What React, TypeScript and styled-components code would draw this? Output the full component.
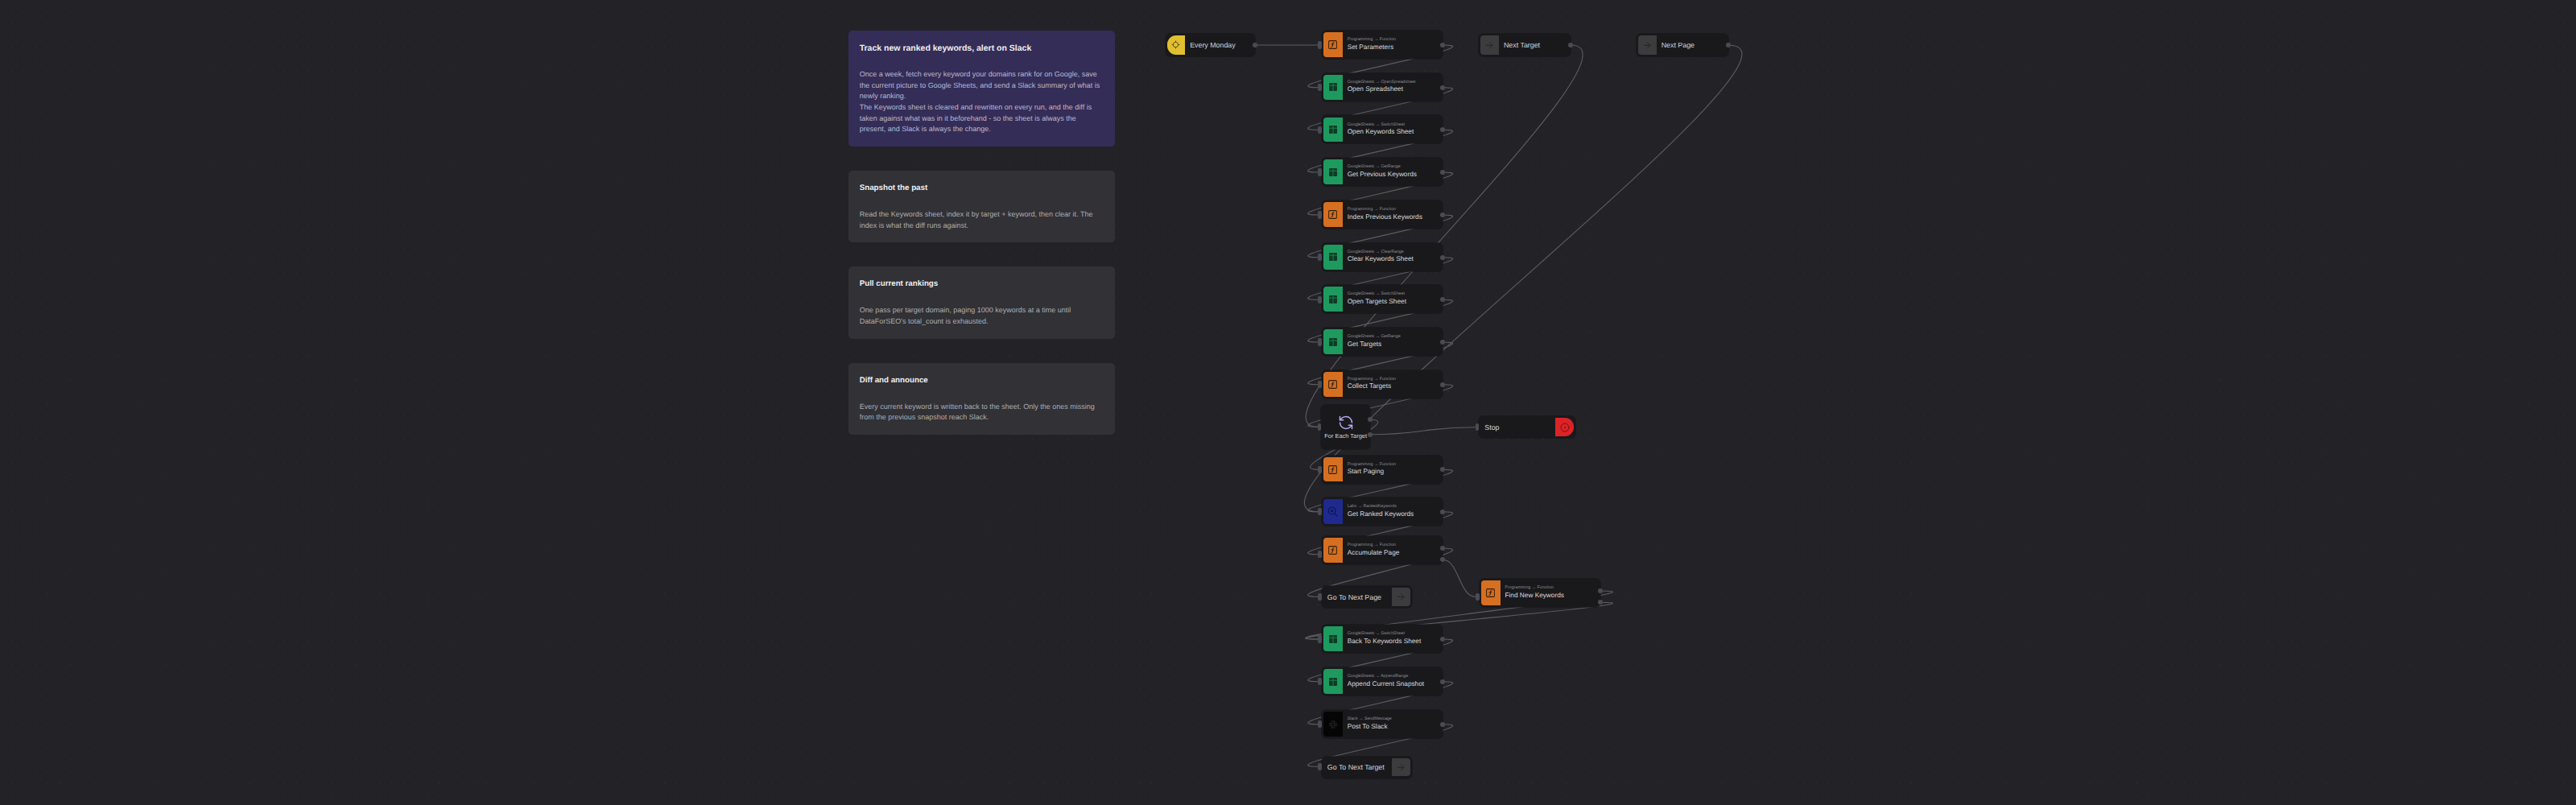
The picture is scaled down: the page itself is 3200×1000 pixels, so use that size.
import styled, { createGlobalStyle } from 'styled-components';
import { ArrowRight, CircleDot, Locate, RefreshCcw, SquareFunction } from 'lucide-react';
import { SiSlack } from 'react-icons/si';

const GlobalStyle = createGlobalStyle`
  html, body {
    margin: 0;
    padding: 0;
    background: #232327;
  }

  body {
    font-family: "Liberation Sans", Arial, sans-serif;
    text-rendering: geometricPrecision;
  }
`;

const Canvas = styled.main`
  position: relative;
  width: 3200px;
  height: 1000px;
  overflow: hidden;
  background-color: #232327;
  background-image: radial-gradient(circle, #303036 0.7px, transparent 0.8px);
  background-size: 14.75px 14.75px;
  background-position: 7px 7px;
`;

const Notes = styled.section`
  position: absolute;
  left: 1054px;
  top: 38.2px;
  width: 331px;
  display: flex;
  flex-direction: column;
  gap: 30.2px;
`;

const Note = styled.article<{ $primary?: boolean }>`
  box-sizing: border-box;
  padding: 15px 13.7px 14px;
  border-radius: 5px;
  background: ${({ $primary }) => ($primary ? '#342d57' : '#313136')};
  color: ${({ $primary }) => ($primary ? '#bcb8cf' : '#aeaeb1')};
`;

const NoteTitle = styled.h2<{ $primary?: boolean }>`
  margin: 0 0 19px;
  font-size: ${({ $primary }) => ($primary ? '10.5px' : '9.75px')};
  line-height: 14px;
  font-weight: bold;
  color: #efeff2;
`;

const NoteBody = styled.p`
  margin: 0;
  font-size: 9px;
  line-height: 13.6px;
`;

const Edges = styled.svg`
  position: absolute;
  inset: 0;
  fill: none;
  stroke: #5e5e62;
  stroke-width: 1.1;
`;

const Node = styled.div<{ $x: number; $y: number; $w: number; $h: number }>`
  position: absolute;
  left: ${({ $x }) => $x}px;
  top: ${({ $y }) => $y}px;
  width: ${({ $w }) => $w}px;
  height: ${({ $h }) => $h}px;
  box-sizing: border-box;
  display: flex;
  align-items: center;
  padding: 2.2px 2px;
  border-radius: 6px;
  background: #19191c;
  box-shadow: 0 0 0 1px rgba(20, 20, 23, 0.55);
`;

const LoopNode = styled(Node)`
  flex-direction: column;
  justify-content: flex-start;
  padding: 12px 0 0;
`;

const IconBlock = styled.div<{ $color: string; $shape: 'left' | 'right' | 'pillLeft' | 'pillRight'; $wide?: boolean }>`
  flex: 0 0 auto;
  width: ${({ $wide }) => ($wide ? '24.5px' : '22.7px')};
  height: 100%;
  display: flex;
  align-items: center;
  justify-content: center;
  background: ${({ $color }) => $color};
  border-radius: ${({ $shape }) =>
    ({
      left: '4px 0 0 4px',
      right: '0 4px 4px 0',
      pillLeft: '11px 0 0 11px',
      pillRight: '0 11px 11px 0',
    })[$shape]};
`;

const TextStack = styled.div`
  display: flex;
  flex-direction: column;
  gap: 0.7px;
  margin-left: 5.5px;
  padding-bottom: 1.6px;
  min-width: 0;
`;

const Service = styled.span`
  font-size: 5.3px;
  line-height: 7px;
  color: #8d8d94;
  white-space: nowrap;
`;

const Title = styled.span`
  font-size: 8.25px;
  line-height: 9.5px;
  color: #dadadc;
  white-space: nowrap;
`;

const Label = styled.span<{ $flush?: boolean }>`
  flex: 1 1 auto;
  margin-left: ${({ $flush }) => ($flush ? '5.3px' : '6px')};
  font-size: 8.85px;
  color: #d6d6d8;
  white-space: nowrap;
`;

const LoopLabel = styled.span`
  margin-top: 1.5px;
  font-size: 7.43px;
  line-height: 9px;
  color: #d6d6d8;
  white-space: nowrap;
`;

const InHandle = styled.i<{ $top: number }>`
  position: absolute;
  left: -4.4px;
  top: ${({ $top }) => $top - 4.6}px;
  width: 4.4px;
  height: 9.2px;
  border-radius: 2px;
  background: #4b4b53;
`;

const OutHandle = styled.i<{ $top: number }>`
  position: absolute;
  right: -3px;
  top: ${({ $top }) => $top - 3}px;
  width: 6px;
  height: 6px;
  border-radius: 50%;
  background: #4b4b53;
`;

const SheetsIcon = () => (
  <svg width="10" height="10" viewBox="0 0 10 10">
    <rect width="10" height="10" rx="1" fill="#0c3b26" />
    <path d="M0 3.2H10M5 0.6V10" stroke="#1f9a5f" strokeWidth="0.7" fill="none" />
  </svg>
);

const SearchIcon = () => (
  <svg width="13" height="13" viewBox="0 0 13 13" fill="none" stroke="#0e1552" strokeWidth="1.1">
    <circle cx="5.6" cy="5.6" r="4.4" />
    <circle cx="5.6" cy="5.6" r="1.6" fill="#0e1552" stroke="none" />
    <path d="M8.8 8.8L12.2 12.2" strokeLinecap="round" />
  </svg>
);

type Kind = 'fn' | 'sheets' | 'labs' | 'slack';

const kindStyle: Record<Kind, { color: string; icon: React.ReactNode }> = {
  fn: { color: '#d76f20', icon: <SquareFunction size={13} color="#33200f" strokeWidth={1.9} /> },
  sheets: { color: '#1f9a5f', icon: <SheetsIcon /> },
  labs: { color: '#1f2a8e', icon: <SearchIcon /> },
  slack: { color: '#050505', icon: <SiSlack size={10} color="#1e1e1e" /> },
};

interface ActionItem {
  kind: Kind;
  service: string;
  title: string;
  y: number;
  inY: number;
  outY: number[];
  x?: number;
}

const COL = 1641.7;
const ACTION_W = 150.3;
const ACTION_H = 35;

const seq = (kind: Kind, service: string, title: string, y: number, hy: number): ActionItem => ({
  kind,
  service,
  title,
  y,
  inY: hy,
  outY: [hy],
});

const actions: ActionItem[] = [
  seq('fn', 'Programming → Function', 'Set Parameters', 38, 56),
  seq('sheets', 'GoogleSheets → OpenSpreadsheet', 'Open Spreadsheet', 90.7, 108.7),
  seq('sheets', 'GoogleSheets → SwitchSheet', 'Open Keywords Sheet', 143.4, 161.3),
  seq('sheets', 'GoogleSheets → GetRange', 'Get Previous Keywords', 196, 214),
  seq('fn', 'Programming → Function', 'Index Previous Keywords', 249, 267),
  seq('sheets', 'GoogleSheets → ClearRange', 'Clear Keywords Sheet', 301.7, 319.7),
  seq('sheets', 'GoogleSheets → SwitchSheet', 'Open Targets Sheet', 354.3, 372.3),
  seq('sheets', 'GoogleSheets → GetRange', 'Get Targets', 407, 425),
  seq('fn', 'Programming → Function', 'Collect Targets', 459.7, 477.7),
  seq('fn', 'Programming → Function', 'Start Paging', 565.5, 583.3),
  seq('labs', 'Labs → RankedKeywords', 'Get Ranked Keywords', 618, 635.7),
  {
    kind: 'fn',
    service: 'Programming → Function',
    title: 'Accumulate Page',
    y: 666,
    inY: 688.7,
    outY: [681, 695.3],
  },
  {
    kind: 'fn',
    service: 'Programming → Function',
    title: 'Find New Keywords',
    y: 719,
    inY: 741.3,
    outY: [734, 748.3],
    x: 1837.5,
  },
  seq('sheets', 'GoogleSheets → SwitchSheet', 'Back To Keywords Sheet', 776, 794),
  seq('sheets', 'GoogleSheets → AppendRange', 'Append Current Snapshot', 829, 846.7),
  seq('slack', 'Slack → SendMessage', 'Post To Slack', 882, 899.7),
];

// same curve the canvas library draws: half the distance going forward, a sqrt loop going back
const controlOffset = (d: number) => (d >= 0 ? 0.5 * d : 6.25 * Math.sqrt(-d));

const edgePath = (sx: number, sy: number, tx: number, ty: number) => {
  const off = controlOffset(tx - sx);
  return `M${sx} ${sy}C${sx + off} ${sy} ${tx - off} ${ty} ${tx} ${ty}`;
};

const OUT = COL + ACTION_W;
const IN = COL - 4.4;
const FIND_OUT = 1837.5 + ACTION_W;

const edges: [number, number, number, number][] = [
  [1559, 56, IN, 56],
  [OUT, 56, IN, 108.7],
  [OUT, 108.7, IN, 161.3],
  [OUT, 161.3, IN, 214],
  [OUT, 214, IN, 267],
  [OUT, 267, IN, 319.7],
  [OUT, 319.7, IN, 372.3],
  [OUT, 372.3, IN, 425],
  [OUT, 425, IN, 477.7],
  [OUT, 477.7, IN, 530.3],
  [1951, 56, IN, 530.3],
  [1702, 521.3, IN, 583.3],
  [1702, 539.7, 1833, 530.7],
  [OUT, 583.3, IN, 635.7],
  [2147, 56, IN, 635.7],
  [OUT, 635.7, IN, 688.7],
  [OUT, 681, IN, 741.3],
  [OUT, 695.3, 1833, 741.3],
  [FIND_OUT, 734, IN, 794],
  [FIND_OUT, 748.3, IN, 794],
  [OUT, 794, IN, 846.7],
  [OUT, 846.7, IN, 899.7],
  [OUT, 899.7, IN, 952.3],
];

const ActionNode = ({ item }: { item: ActionItem }) => {
  const { color, icon } = kindStyle[item.kind];
  return (
    <Node $x={item.x ?? COL} $y={item.y} $w={ACTION_W} $h={ACTION_H}>
      <InHandle $top={item.inY - item.y} />
      <IconBlock $color={color} $shape="left" $wide>
        {icon}
      </IconBlock>
      <TextStack>
        <Service>{item.service}</Service>
        <Title>{item.title}</Title>
      </TextStack>
      {item.outY.map((y) => (
        <OutHandle key={y} $top={y - item.y} />
      ))}
    </Node>
  );
};

const Arrow = () => <ArrowRight size={12.5} color="#1d1d1f" strokeWidth={1.5} />;

const App = () => (
  <Canvas>
    <GlobalStyle />
    <Notes>
      <Note $primary>
        <NoteTitle $primary>Track new ranked keywords, alert on Slack</NoteTitle>
        <NoteBody>
          Once a week, fetch every keyword your domains rank for on Google, save the current picture to Google
          Sheets, and send a Slack summary of what is newly ranking.
          <br />
          The Keywords sheet is cleared and rewritten on every run, and the diff is taken against what was in it
          beforehand - so the sheet is always the present, and Slack is always the change.
        </NoteBody>
      </Note>
      <Note>
        <NoteTitle>Snapshot the past</NoteTitle>
        <NoteBody>
          Read the Keywords sheet, index it by target + keyword, then clear it. The index is what the diff runs
          against.
        </NoteBody>
      </Note>
      <Note>
        <NoteTitle>Pull current rankings</NoteTitle>
        <NoteBody>
          One pass per target domain, paging 1000 keywords at a time until DataForSEO's total_count is exhausted.
        </NoteBody>
      </Note>
      <Note>
        <NoteTitle>Diff and announce</NoteTitle>
        <NoteBody>
          Every current keyword is written back to the sheet. Only the ones missing from the previous snapshot reach
          Slack.
        </NoteBody>
      </Note>
    </Notes>

    <Edges width="3200" height="1000" viewBox="0 0 3200 1000">
      {edges.map(([sx, sy, tx, ty]) => (
        <path key={`${sx}-${sy}-${tx}-${ty}`} d={edgePath(sx, sy, tx, ty)} />
      ))}
    </Edges>

    <Node $x={1447.5} $y={42} $w={111.5} $h={27.8}>
      <IconBlock $color="#e0c030" $shape="pillLeft">
        <Locate size={11} color="#5c4d10" strokeWidth={2} />
      </IconBlock>
      <Label>Every Monday</Label>
      <OutHandle $top={14} />
    </Node>

    {actions.map((item) => (
      <ActionNode key={item.title} item={item} />
    ))}

    <LoopNode $x={1641.3} $y={503} $w={60.7} $h={55}>
      <InHandle $top={27.3} />
      <RefreshCcw size={20} color="#b5a8ee" strokeWidth={1.8} />
      <LoopLabel>For Each Target</LoopLabel>
      <OutHandle $top={18.3} />
      <OutHandle $top={36.7} />
    </LoopNode>

    <Node $x={1837.3} $y={42} $w={113.7} $h={27.8}>
      <IconBlock $color="#3c3c3e" $shape="left">
        <Arrow />
      </IconBlock>
      <Label>Next Target</Label>
      <OutHandle $top={14} />
    </Node>

    <Node $x={2033} $y={42} $w={114} $h={27.8}>
      <IconBlock $color="#3c3c3e" $shape="left">
        <Arrow />
      </IconBlock>
      <Label>Next Page</Label>
      <OutHandle $top={14} />
    </Node>

    <Node $x={1837} $y={517} $w={120} $h={27.2}>
      <InHandle $top={13.6} />
      <Label $flush>Stop</Label>
      <IconBlock $color="#dc2327" $shape="pillRight">
        <CircleDot size={12} color="#6e1015" strokeWidth={1.8} />
      </IconBlock>
    </Node>

    <Node $x={1641.5} $y={728} $w={112.5} $h={27}>
      <InHandle $top={13.3} />
      <Label $flush>Go To Next Page</Label>
      <IconBlock $color="#3c3c3e" $shape="right">
        <Arrow />
      </IconBlock>
    </Node>

    <Node $x={1641.5} $y={939.5} $w={112.5} $h={27}>
      <InHandle $top={12.8} />
      <Label $flush>Go To Next Target</Label>
      <IconBlock $color="#3c3c3e" $shape="right">
        <Arrow />
      </IconBlock>
    </Node>
  </Canvas>
);

export default App;
